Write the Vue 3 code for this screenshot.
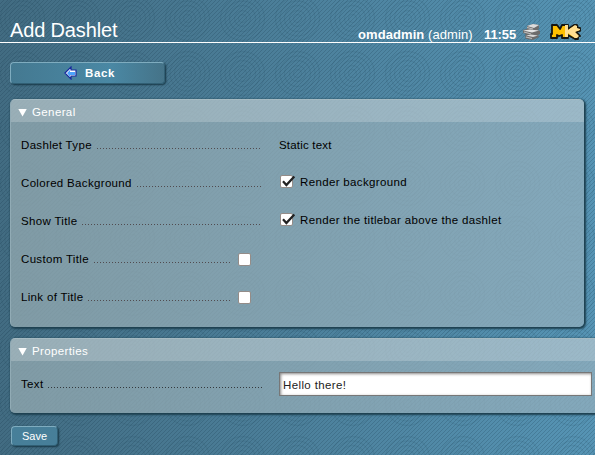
<script setup>
import { ref } from 'vue'
const rows = ref([
  { label: 'Dashlet Type', kind: 'text', value: 'Static text' },
  { label: 'Colored Background', kind: 'check', value: 'Render background' },
  { label: 'Show Title', kind: 'check', value: 'Render the titlebar above the dashlet' },
  { label: 'Custom Title', kind: 'optional', on: false },
  { label: 'Link of Title', kind: 'optional', on: false },
])
const text = ref('Hello there!')
</script>

<template>
  <div class="page">
    <svg class="texture" width="595" height="455" aria-hidden="true">
      <defs>
        <pattern id="rings" x="435" y="46" width="55" height="55" patternUnits="userSpaceOnUse">
          <g fill="none" stroke="#173b50" stroke-opacity=".1" stroke-width="1.3">
            <circle cx="27.5" cy="27.5" r="4" /><circle cx="27.5" cy="27.5" r="8" />
            <circle cx="27.5" cy="27.5" r="13" /><circle cx="27.5" cy="27.5" r="17.5" />
            <circle cx="27.5" cy="27.5" r="22" />
          </g>
        </pattern>
        <pattern id="weave" width="4" height="4" patternUnits="userSpaceOnUse" shape-rendering="crispEdges">
          <g fill="#102f42" fill-opacity=".2">
            <rect x="3" y="0" width="1" height="1" /><rect x="2" y="1" width="1" height="1" />
            <rect x="1" y="2" width="1" height="1" /><rect x="0" y="3" width="1" height="1" />
          </g>
        </pattern>
      </defs>
      <rect width="595" height="455" fill="url(#rings)" />
      <rect width="595" height="455" fill="url(#weave)" />
    </svg>
    <header class="header">
      <h1>Add Dashlet</h1>
      <div class="user"><b>omdadmin</b> (admin)</div>
      <b class="time">11:55</b>
      <svg class="stack" width="18" height="18" viewBox="0 0 18 18">
        <path d="M4 3l6-2 6 1v3l-1 2 2 1v3l-2 1 1 2-6 3-7-1-1-3 1-2-3-1V7l4-1z" fill="#6c6c6c" />
        <path d="M4 3l6-2 6 1-5 3z" fill="#dcdcdc" />
        <path d="M0 7.5l7-1 9 1-7 2z" fill="#e4e4e4" />
        <path d="M3 12.5l5-1 7 1-5 1.5z" fill="#d8d8d8" />
        <path d="M4 4.5l6 1.5M1 9l7 2M3 14l6 1.5" fill="none" stroke="#bdbdbd" stroke-width="1.2" />
      </svg>
      <svg class="logo" width="32" height="18" viewBox="0 0 32 18">
        <path d="M2 2h5l3 4 2-4h6v4l6-4h3l1 3h2v3l-4 1 4 4h-2v3h-3l-7-4v3h-6v-3l-3 1-2-1v3H1V11h1z" fill="#ffc000" stroke="#17160f" stroke-width="1.8" stroke-linejoin="round" />
        <path d="M15 2h3v5l7-5 2 1v2l3 1v1l-5 2 4 4-2 2h-2l-7-5v4h-3z" fill="#ffdf91" />
      </svg>
    </header>
    <main>
      <button class="back">
        <svg width="14" height="14" viewBox="0 0 14 14">
          <path d="M1 7L7 1v3h5v6H7v3z" fill="#fff" stroke="#182a9d" stroke-width="1.2" />
          <path d="M3 7l3-3v2h5v3H6v2z" fill="#4ba1fc" />
        </svg>
        Back
      </button>
      <section class="panel general">
        <h2><i class="fold"></i>General</h2>
        <div v-for="row in rows" :key="row.label" class="row">
          <div class="legend" :class="{ short: row.kind === 'optional' }">{{ row.label }}<span class="leader"></span></div>
          <span v-if="row.kind === 'optional'" class="box"></span>
          <div v-else class="value" :class="{ checked: row.kind === 'check' }">
            <span v-if="row.kind === 'check'" class="box">
              <svg width="15" height="13" viewBox="0 0 15 13"><path d="M2 6.3L5.4 10 13.3 1.5" fill="none" stroke="#222" stroke-width="2.3" /></svg>
            </span>{{ row.value }}
          </div>
        </div>
      </section>
      <section class="panel properties">
        <h2><i class="fold"></i>Properties</h2>
        <div class="row">
          <div class="legend">Text<span class="leader dense"></span></div>
          <input v-model="text" />
        </div>
      </section>
      <button class="save">Save</button>
    </main>
  </div>
</template>

<style>
body { overflow: hidden; }
</style>
<style scoped>
* { box-sizing: border-box; }
.page { position: relative; width: 595px; height: 455px; overflow: hidden; background: linear-gradient(90deg, #426c82, #5694b4); font: 11.5px/14px "Liberation Sans", Arial, sans-serif; color: #000; }
.texture { position: absolute; inset: 0; }
.header { position: relative; display: flex; height: 43px; border-bottom: 1px solid #fff; color: #fff; padding-left: 10px; }
h1 { margin: 18px 0 0; width: 348px; font-size: 20px; line-height: 24px; font-weight: 400; letter-spacing: -.15px; }
.user { width: 126px; margin-top: 27px; font-size: 13px; line-height: 15px; letter-spacing: .08px; white-space: nowrap; }
.time { width: 39px; margin-top: 27px; font-size: 13px; line-height: 15px; letter-spacing: -.1px; }
.stack { margin-top: 23px; }
.logo { margin: 23px 0 0 9px; }
main { position: relative; padding: 19px 0 0 10px; }
button { display: flex; align-items: center; justify-content: center; font-family: inherit; color: #fff; padding: 0; border: 1px solid #7facbf; border-right-color: #315f74; border-bottom-color: #315f74; border-radius: 4px; box-shadow: 1px 1px 2px #173746; background: #477f99; }
.back { width: 155px; height: 22px; padding-left: 4px; gap: 7px; font-size: 11.5px; font-weight: 700; letter-spacing: .6px; background: linear-gradient(90deg, #447991, #4a88a4 65%, #457388); }
.panel { border-radius: 5px; overflow: hidden; box-shadow: 1px 1px 2px 1px #1d4050; background: linear-gradient(90deg, rgba(152, 173, 179, .72) 0, rgba(148, 176, 190, .72) 585px); border-left: 1px solid #91abb5; border-top: 1px solid #a5bac2; }
.general { width: 574px; height: 228px; margin-top: 15px; }
.properties { width: 620px; height: 75px; margin-top: 11px; }
h2 { display: flex; align-items: center; height: 22px; margin: 0; padding: 1px 0 0 7px; font-size: 11.5px; line-height: 14px; font-weight: 400; letter-spacing: .38px; color: #fff; background: rgba(255, 255, 255, .2); }
.fold { width: 9px; height: 8px; margin: 2px 5px 0 0; background: #fff; clip-path: polygon(0 0, 100% 0, 50% 100%); }
.row { display: flex; height: 38px; align-items: center; padding: 7px 0 0 10px; }
.legend { display: flex; width: 241px; letter-spacing: .33px; white-space: nowrap; }
.legend.short { width: 211px; }
.leader { flex: 1; height: 1px; margin: 10px 0 0 5px; background: repeating-linear-gradient(90deg, #514c50 0 1px, transparent 1px 3px); }
.leader.dense { background: repeating-linear-gradient(90deg, #343a3e 0 1px, transparent 1px 3px); }
.value { display: flex; align-items: center; margin-left: 17px; letter-spacing: .2px; }
.value.checked { margin-top: -2px; letter-spacing: .35px; }
.box { display: block; width: 13px; height: 13px; margin: 2px 0 0 6px; border: 1px solid #948c88; border-radius: 2px; background: #fff; }
.checked .box { margin: 0 7px 0 1px; }
.box svg { display: block; margin-top: -1px; overflow: visible; }
.properties .row { height: 42px; padding-top: 4px; }
.properties .legend { margin-top: -1px; }
input { width: 313px; height: 24px; margin-left: 17px; padding: 2px 3px 0; border: 1px solid #777; border-radius: 0; font: 11.5px "Liberation Sans", sans-serif; letter-spacing: .38px; color: #222; background: #fff; box-shadow: inset 1px 1px 3px #888; outline: 0; }
.save { width: 47px; height: 20px; margin: 13px 0 0 1px; font-size: 11px; }
</style>
